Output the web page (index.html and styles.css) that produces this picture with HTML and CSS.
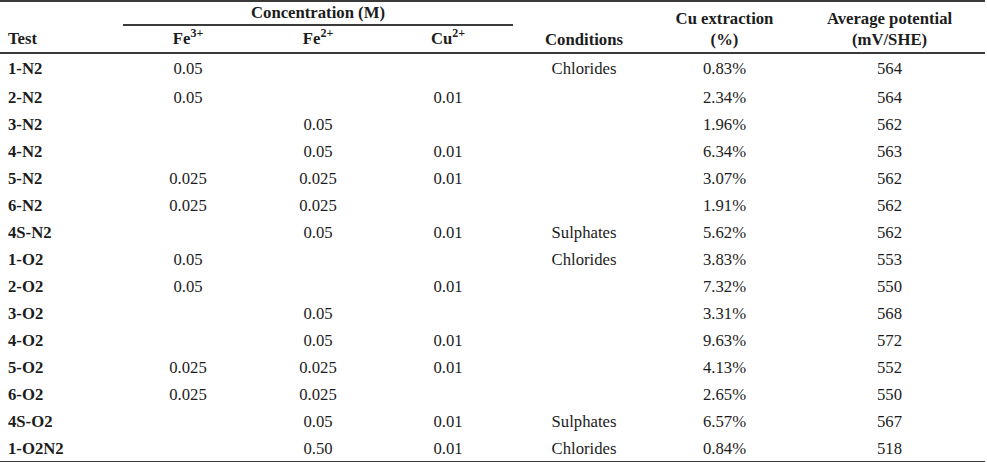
FILE: index.html
```html
<!DOCTYPE html>
<html>
<head>
<meta charset="utf-8">
<link rel="stylesheet" href="styles.css">
</head>
<body>
<table class="data">
  <colgroup>
    <col class="c-test"><col class="c-fe"><col class="c-fe"><col class="c-fe">
    <col class="c-cond"><col class="c-ext"><col class="c-pot">
  </colgroup>
  <thead>
    <tr class="h1">
      <th class="test" rowspan="2">Test</th>
      <th class="group" colspan="3">Concentration (M)</th>
      <th class="span" rowspan="2">Conditions</th>
      <th class="span" rowspan="2">Cu extraction<br>(%)</th>
      <th class="span" rowspan="2">Average potential<br>(mV/SHE)</th>
    </tr>
    <tr class="h2">
      <th>Fe<sup>3+</sup></th>
      <th>Fe<sup>2+</sup></th>
      <th>Cu<sup>2+</sup></th>
    </tr>
  </thead>
  <tbody>
    <tr class="first"><td class="name">1-N2</td><td>0.05</td><td></td><td></td><td>Chlorides</td><td>0.83%</td><td>564</td></tr>
    <tr><td class="name">2-N2</td><td>0.05</td><td></td><td>0.01</td><td></td><td>2.34%</td><td>564</td></tr>
    <tr><td class="name">3-N2</td><td></td><td>0.05</td><td></td><td></td><td>1.96%</td><td>562</td></tr>
    <tr><td class="name">4-N2</td><td></td><td>0.05</td><td>0.01</td><td></td><td>6.34%</td><td>563</td></tr>
    <tr><td class="name">5-N2</td><td>0.025</td><td>0.025</td><td>0.01</td><td></td><td>3.07%</td><td>562</td></tr>
    <tr><td class="name">6-N2</td><td>0.025</td><td>0.025</td><td></td><td></td><td>1.91%</td><td>562</td></tr>
    <tr><td class="name">4S-N2</td><td></td><td>0.05</td><td>0.01</td><td>Sulphates</td><td>5.62%</td><td>562</td></tr>
    <tr><td class="name">1-O2</td><td>0.05</td><td></td><td></td><td>Chlorides</td><td>3.83%</td><td>553</td></tr>
    <tr><td class="name">2-O2</td><td>0.05</td><td></td><td>0.01</td><td></td><td>7.32%</td><td>550</td></tr>
    <tr><td class="name">3-O2</td><td></td><td>0.05</td><td></td><td></td><td>3.31%</td><td>568</td></tr>
    <tr><td class="name">4-O2</td><td></td><td>0.05</td><td>0.01</td><td></td><td>9.63%</td><td>572</td></tr>
    <tr><td class="name">5-O2</td><td>0.025</td><td>0.025</td><td>0.01</td><td></td><td>4.13%</td><td>552</td></tr>
    <tr><td class="name">6-O2</td><td>0.025</td><td>0.025</td><td></td><td></td><td>2.65%</td><td>550</td></tr>
    <tr><td class="name">4S-O2</td><td></td><td>0.05</td><td>0.01</td><td>Sulphates</td><td>6.57%</td><td>567</td></tr>
    <tr class="last"><td class="name">1-O2N2</td><td></td><td>0.50</td><td>0.01</td><td>Chlorides</td><td>0.84%</td><td>518</td></tr>
  </tbody>
</table>
</body>
</html>
```
FILE: styles.css
```css
html, body {
  margin: 0;
  padding: 0;
  background: #ffffff;
}

.data {
  width: 985px;
  table-layout: fixed;
  border-collapse: separate;
  border-spacing: 0;
  font-family: "Liberation Serif", "Times New Roman", serif;
  font-size: 16.7px;
  color: #1c1c1c;
}

.c-test { width: 123px; }
.c-fe { width: 130px; }
.c-cond { width: 142px; }
.c-ext { width: 139px; }
.c-pot { width: 191px; }

.data th {
  font-weight: bold;
  text-align: center;
  padding: 0;
  line-height: 21px;
}

.data sup {
  font-size: 0.72em;
  line-height: 0;
  vertical-align: 0.62em;
}

.h1 th {
  border-top: 2px solid #3a3a3a;
  vertical-align: bottom;
}

.h1 .group {
  height: 22px;
  line-height: 22px;
  border-bottom: 2px solid #3a3a3a;
  vertical-align: middle;
}

.h1 .span,
.h1 .test {
  border-bottom: 2px solid #3a3a3a;
  padding-bottom: 2px;
}

.h1 .test {
  text-align: left;
  padding-left: 8px;
  line-height: 26px;
  padding-bottom: 0;
}

.h2 th {
  height: 26px;
  line-height: 26px;
  border-bottom: 2px solid #3a3a3a;
  vertical-align: middle;
}

.data td {
  padding: 0;
  text-align: center;
  line-height: 27px;
  height: 27px;
  vertical-align: top;
}

.data td.name {
  text-align: left;
  padding-left: 8px;
  font-weight: bold;
}

.data tr.first td {
  padding-top: 1px;
  padding-bottom: 2px;
}

.data tr.last td {
  padding-top: 1px;
  line-height: 25px;
  height: 24px;
  border-bottom: 2px solid #3a3a3a;
}
```
